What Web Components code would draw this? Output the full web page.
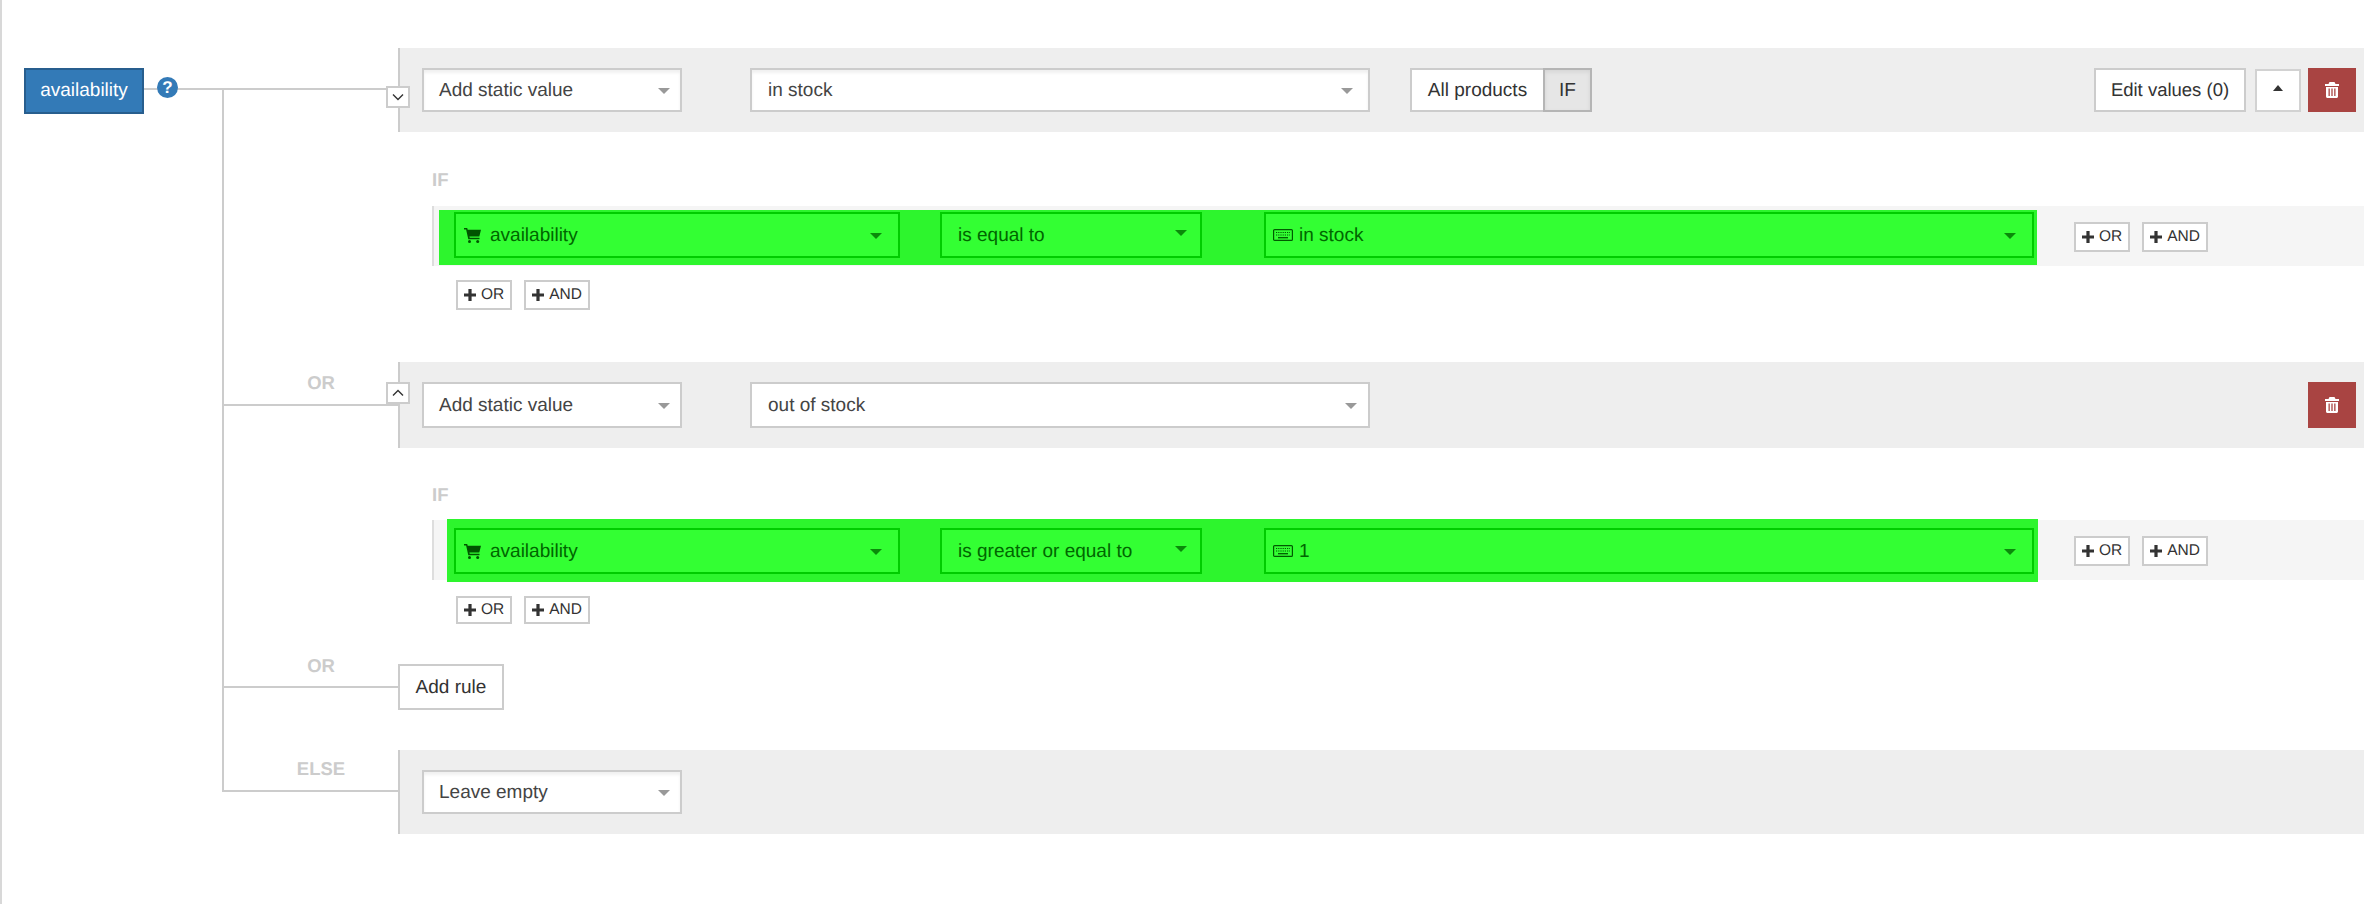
<!DOCTYPE html>
<html>
<head>
<meta charset="utf-8">
<title>Mapping rules</title>
<style>
  html, body { margin: 0; background: #fff; }
  body { font-family: "Liberation Sans", Arial, sans-serif; color: #333; text-rendering: geometricPrecision; }
</style>
</head>
<body>
<mapping-page>
  <root-node slot="root">availability</root-node>

  <tree-branch line="40">
    <rule-panel toggle="down" toggle-top="38">
      <pick-select style="width:260px;height:44px;--pad-left:15px" shade>Add static value</pick-select>
      <pick-select style="width:620px;height:44px;margin-left:68px;--arrow-right:15px" shade>in stock</pick-select>
      <scope-switch style="margin-left:40px"></scope-switch>
      <plain-button style="width:152px;margin-left:auto">Edit values (0)</plain-button>
      <caret-button style="margin-left:9px"></caret-button>
      <trash-button style="margin-left:7px"></trash-button>
    </rule-panel>
    <condition-block style="--if-top:38px;--if-bottom:16px;--ops-top:14px;--ops-height:30px;--block-bottom:52px">
      <condition-row style="--hl-left:5px;--hl-top:4px;--hl-width:1598px;--hl-height:55px;--hl-pad:2px 3px 7px 15px">
        <pick-select tone="green" style="width:446px;--arrow-right:16px"><cart-icon slot="icon"></cart-icon>availability</pick-select>
        <pick-select tone="green" style="width:262px;margin-left:40px;--arrow-right:13px;--arrow-shift:-2px;--pad-left:16px">is equal to</pick-select>
        <pick-select tone="green" style="flex:1;margin-left:62px;--arrow-right:16px"><keys-icon slot="icon"></keys-icon>in stock</pick-select>
      </condition-row>
    </condition-block>
  </tree-branch>

  <tree-branch line="42" label="OR" label-top="10">
    <rule-panel toggle="up" toggle-top="20">
      <pick-select style="width:260px;height:46px;--pad-left:15px">Add static value</pick-select>
      <pick-select style="width:620px;height:46px;margin-left:68px;--arrow-right:11px">out of stock</pick-select>
      <trash-button style="margin-left:auto;height:46px"></trash-button>
    </rule-panel>
    <condition-block style="--if-top:37px;--if-bottom:15px;--ops-top:16px;--ops-height:28px;--block-bottom:26px">
      <condition-row style="--hl-left:13px;--hl-top:-1px;--hl-width:1591px;--hl-height:63px;--hl-pad:9px 4px 8px 7px">
        <pick-select tone="green" style="width:446px;--arrow-right:16px"><cart-icon slot="icon"></cart-icon>availability</pick-select>
        <pick-select tone="green" style="width:262px;margin-left:40px;--arrow-right:13px;--arrow-shift:-2px;--pad-left:16px">is greater or equal to</pick-select>
        <pick-select tone="green" style="flex:1;margin-left:62px;--arrow-right:16px"><keys-icon slot="icon"></keys-icon>1</pick-select>
      </condition-row>
    </condition-block>
  </tree-branch>

  <tree-branch line="36" label="OR" label-top="5">
    <div style="padding:14px 0 40px">
      <plain-button style="width:106px;height:46px;padding-top:2px;font-size:19px">Add rule</plain-button>
    </div>
  </tree-branch>

  <tree-branch line="40" label="ELSE" label-top="8">
    <rule-panel>
      <pick-select style="width:260px;height:44px;--pad-left:15px" shade>Leave empty</pick-select>
    </rule-panel>
  </tree-branch>
</mapping-page>

<script>
  // small base class, every element just gives its markup
  class ShadowEl extends HTMLElement {
    constructor() {
      super();
      this.attachShadow({mode: 'open'});
      const template = document.createElement('template');
      template.innerHTML = this.constructor.markup;
      this.shadowRoot.appendChild(template.content.cloneNode(true));
    }
  }

  class MappingPage extends ShadowEl {
    static markup = `
    <style>
      :host {
        display: flex;
        box-sizing: border-box;
        width: 100%;
        height: 904px;
        padding-top: 48px;
        border-left: 2px solid #d8d8d8;
        overflow: hidden;
      }
      #root {
        flex: none;
        width: 220px;
        padding: 20px 0 0 22px;
        box-sizing: border-box;
        /* stub from the blue button to the trunk */
        background: linear-gradient(#ccc, #ccc) 142px 40px / 78px 2px no-repeat;
      }
      #list {
        flex: 1;
        min-width: 0;
        display: flex;
        flex-direction: column;
        align-self: flex-start;
        /* trunk of the tree */
        background: linear-gradient(#ccc, #ccc) 0 40px / 2px 704px no-repeat;
      }
    </style>
    <div id="root"><slot name="root"></slot></div>
    <div id="list"><slot></slot></div>`;
  }

  class RootNode extends ShadowEl {
    static markup = `
    <style>
      :host { display: flex; align-items: flex-start; }
      #name {
        box-sizing: border-box;
        width: 120px;
        height: 46px;
        display: flex;
        align-items: center;
        justify-content: center;
        background: #337ab7;
        border: 2px solid #285e8e;
        color: #fff;
        font-size: 19px;
      }
      #help {
        width: 21px;
        height: 21px;
        margin: 9px 0 0 13px;
        border-radius: 50%;
        background: #337ab7;
        color: #fff;
        font: bold 17px/21px "Liberation Sans", sans-serif;
        text-align: center;
      }
    </style>
    <div id="name"><slot></slot></div>
    <div id="help">?</div>`;
  }

  class TreeBranch extends ShadowEl {
    static markup = `
    <style>
      :host { display: grid; grid-template-columns: 176px 1fr; }
      #link {
        background: linear-gradient(#ccc, #ccc) 0 var(--line, 40px) / 100% 2px no-repeat;
        padding-left: 22px;
        text-align: center;
      }
      #label {
        display: block;
        margin-top: var(--label-top, 0);
        font: bold 18.5px/22px "Liberation Sans", sans-serif;
        color: #ccc;
      }
      #body { min-width: 0; }
    </style>
    <div id="link"><span id="label"></span></div>
    <div id="body"><slot></slot></div>`;

    connectedCallback() {
      this.style.setProperty('--line', this.getAttribute('line') + 'px');
      this.style.setProperty('--label-top', (this.getAttribute('label-top') || 0) + 'px');
      this.shadowRoot.querySelector('#label').textContent = this.getAttribute('label') || '';
    }
  }

  class RulePanel extends ShadowEl {
    static markup = `
    <style>
      :host {
        display: flex;
        align-items: flex-start;
        position: relative;
        box-sizing: border-box;
        padding: 20px 8px 20px 22px;
        background: #eee;
        border-left: 2px solid #ccc;
      }
      #toggle {
        display: none;
        position: absolute;
        left: -14px;
        box-sizing: border-box;
        width: 24px;
        height: 22px;
        background: #fff;
        border: 2px solid #ccc;
        align-items: center;
        justify-content: center;
      }
      svg { width: 12px; height: 8px; }
    </style>
    <div id="toggle"><svg viewBox="0 0 12 8"><polyline id="mark" fill="none" stroke="#333" stroke-width="1.4"/></svg></div>
    <slot></slot>`;

    connectedCallback() {
      const dir = this.getAttribute('toggle');
      if(!dir) return;
      const toggle = this.shadowRoot.querySelector('#toggle');
      toggle.style.display = 'flex';
      toggle.style.top = this.getAttribute('toggle-top') + 'px';
      this.shadowRoot.querySelector('#mark').setAttribute('points',
        dir === 'down' ? '1,1.5 6,6.5 11,1.5' : '1,6.5 6,1.5 11,6.5');
    }
  }

  class PickSelect extends ShadowEl {
    static markup = `
    <style>
      :host {
        display: flex;
        align-items: center;
        box-sizing: border-box;
        height: 46px;
        padding-left: var(--pad-left, 16px);
        background: #fff;
        border: 2px solid #ccc;
        color: #444;
        font-size: 19px;
        white-space: nowrap;
      }
      :host([shade]) { box-shadow: inset 0 3px 3px rgba(0, 0, 0, .06); }
      :host([tone="green"]) {
        background: #33ff33;
        border-color: #00cc00;
        color: #006600;
        padding-left: var(--pad-left, 8px);
      }
      :host([tone="green"]) #arrow { border-top-color: #0a8a0a; }
      #text { flex: 1; padding-top: 2px; }
      ::slotted(cart-icon) { margin-right: 9px; }
      ::slotted(keys-icon) { margin-right: 6px; }
      #arrow {
        width: 0;
        height: 0;
        margin-right: var(--arrow-right, 10px);
        transform: translateY(var(--arrow-shift, 1px));
        border: 6px solid transparent;
        border-top-color: #999;
        border-bottom-width: 0;
      }
    </style>
    <slot name="icon"></slot>
    <div id="text"><slot></slot></div>
    <div id="arrow"></div>`;
  }

  class PlainButton extends ShadowEl {
    static markup = `
    <style>
      :host {
        display: inline-flex;
        align-items: center;
        justify-content: center;
        box-sizing: border-box;
        height: 44px;
        background: #fff;
        border: 2px solid #ccc;
        color: #333;
        font-size: 18.5px;
      }
    </style>
    <slot></slot>`;
  }

  class ScopeSwitch extends ShadowEl {
    static markup = `
    <style>
      :host { display: flex; font-size: 19px; color: #333; height: 44px; }
      div {
        box-sizing: border-box;
        display: flex;
        align-items: center;
        justify-content: center;
        background: #fff;
        border: 2px solid #ccc;
        padding-top: 2px;
      }
      #all { width: 133px; border-right: 0; }
      #if {
        width: 49px;
        background: #e6e6e6;
        border-color: #b5b5b5;
        box-shadow: inset 0 2px 4px rgba(0, 0, 0, .08);
      }
    </style>
    <div id="all">All products</div>
    <div id="if">IF</div>`;
  }

  class CaretButton extends ShadowEl {
    static markup = `
    <style>
      :host {
        display: flex;
        justify-content: center;
        box-sizing: border-box;
        width: 46px;
        height: 43px;
        margin-top: 1px;
        padding-top: 14px;
        background: #fff;
        border: 2px solid #d2d2d2;
      }
      div {
        width: 0;
        height: 0;
        border: 5px solid transparent;
        border-bottom: 6px solid #333;
        border-top-width: 0;
      }
    </style>
    <div></div>`;
  }

  class TrashButton extends ShadowEl {
    static markup = `
    <style>
      :host {
        display: flex;
        align-items: center;
        justify-content: center;
        box-sizing: border-box;
        width: 48px;
        height: 44px;
        background: #a94442;
      }
      svg { width: 14px; height: 16px; }
    </style>
    <svg viewBox="0 0 14 16"><path fill="#fff" fill-rule="evenodd" d="M4.500 0h5l1 2H14v2H0V2h3.500zM1 5h12v9.500c0 .8-.7 1.500-1.500 1.500h-9C1.700 16 1 15.300 1 14.500zM3.500 6.500v7.500h1.300V6.500zM6.350 6.500v7.500h1.300V6.500zM9.200 6.500v7.500h1.300V6.500z"/></svg>`;
  }

  class ConditionBlock extends ShadowEl {
    static markup = `
    <style>
      :host {
        display: block;
        padding: var(--if-top) 0 var(--block-bottom) 34px;
      }
      #if {
        height: 20px;
        margin-bottom: var(--if-bottom);
        font: bold 18.5px/20px "Liberation Sans", sans-serif;
        color: #ccc;
      }
      #ops {
        display: flex;
        gap: 12px;
        margin: var(--ops-top) 0 0 24px;
        --plus-height: var(--ops-height);
      }
    </style>
    <div id="if">IF</div>
    <slot></slot>
    <div id="ops"><plus-button>OR</plus-button><plus-button>AND</plus-button></div>`;
  }

  class ConditionRow extends ShadowEl {
    static markup = `
    <style>
      :host {
        display: flex;
        align-items: flex-start;
        height: 60px;
        background: #f5f5f5;
        border-left: 2px solid #ddd;
      }
      #hl {
        display: flex;
        flex: none;
        box-sizing: border-box;
        width: var(--hl-width);
        height: var(--hl-height);
        margin: var(--hl-top) 0 0 var(--hl-left);
        padding: var(--hl-pad);
        background: #2df52d;
      }
      #ops {
        display: flex;
        gap: 12px;
        margin: 16px 156px 0 auto;
      }
    </style>
    <div id="hl"><slot></slot></div>
    <div id="ops"><plus-button>OR</plus-button><plus-button>AND</plus-button></div>`;
  }

  class PlusButton extends ShadowEl {
    static markup = `
    <style>
      :host {
        display: inline-flex;
        align-items: center;
        box-sizing: border-box;
        height: var(--plus-height, 30px);
        padding: 0 6px;
        background: #fff;
        border: 2px solid #ccc;
        color: #333;
        font-size: 15.5px;
      }
      svg { width: 12px; height: 12px; margin-right: 5px; }
    </style>
    <svg viewBox="0 0 12 12"><path fill="#333" d="M4.400 0h3.200v4.400H12v3.200H7.600V12H4.400V7.600H0V4.400h4.400z"/></svg>
    <slot></slot>`;
  }

  class CartIcon extends ShadowEl {
    static markup = `
    <style>
      :host { display: flex; }
      svg { width: 17px; height: 15px; }
    </style>
    <svg viewBox="0 0 17 15"><path fill="#005400" d="M0 0h3.200l.5 1.800H17l-1.700 6.700H5.400l.3 1.300h9.800v1.500H4.300L2.100 1.400H0z"/><circle cx="5.500" cy="13.500" r="1.500" fill="#005400"/><circle cx="13.700" cy="13.500" r="1.500" fill="#005400"/></svg>`;
  }

  class KeysIcon extends ShadowEl {
    static markup = `
    <style>
      :host { display: flex; margin-left: -1px; }
      svg { width: 20px; height: 12px; }
    </style>
    <svg viewBox="0 0 20 12">
      <rect x=".6" y=".6" width="18.800" height="10.800" rx="1" fill="none" stroke="#005a00" stroke-width="1.200"/>
      <path stroke="#005a00" stroke-width="1.200" stroke-dasharray="1.200 1" fill="none" d="M3 3.500h14M3 6h14"/>
      <path stroke="#005a00" stroke-width="1.300" fill="none" d="M5 8.700h10"/>
    </svg>`;
  }

  customElements.define('mapping-page', MappingPage);
  customElements.define('root-node', RootNode);
  customElements.define('tree-branch', TreeBranch);
  customElements.define('rule-panel', RulePanel);
  customElements.define('pick-select', PickSelect);
  customElements.define('plain-button', PlainButton);
  customElements.define('scope-switch', ScopeSwitch);
  customElements.define('caret-button', CaretButton);
  customElements.define('trash-button', TrashButton);
  customElements.define('condition-block', ConditionBlock);
  customElements.define('condition-row', ConditionRow);
  customElements.define('plus-button', PlusButton);
  customElements.define('cart-icon', CartIcon);
  customElements.define('keys-icon', KeysIcon);
</script>
</body>
</html>
